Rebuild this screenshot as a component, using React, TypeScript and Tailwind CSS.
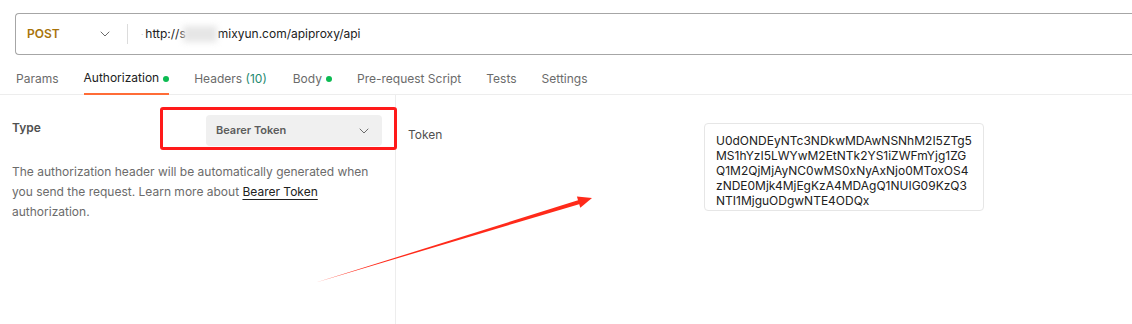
import React from "react";

const Chevron = ({ className = "" }: { className?: string }) => (
  <svg width="10" height="6" viewBox="0 0 10 6" className={className} fill="none">
    <path d="M1 1l4 4 4-4" stroke="#6b6b6b" strokeWidth="1" strokeLinecap="round" strokeLinejoin="round" />
  </svg>
);

const Dot = () => <span className="inline-block w-[6px] h-[6px] rounded-full bg-[#0cbb52] ml-[4px] mt-[1px]" />;

export default function App() {
  const tabs: { label: React.ReactNode; active?: boolean; dot?: boolean; extra?: string }[] = [
    { label: "Params" },
    { label: "Authorization", active: true, dot: true },
    {
      label: (
        <>
          Headers <span className="text-[#1f8a70]">(10)</span>
        </>
      ),
      extra: "mr-[1px]",
    },
    { label: "Body", dot: true },
    { label: "Pre-request Script" },
    { label: "Tests" },
    { label: "Settings" },
  ];

  return (
    <div
      className="relative w-[1132px] h-[324px] bg-white overflow-hidden text-[#212121]"
      style={{ fontFamily: "Inter, 'Noto Sans', 'Liberation Sans', sans-serif" }}
    >
      {/* URL bar */}
      <div className="pt-[13px] pl-[15px]">
        <div className="h-[42px] border border-r-0 border-[#a6a6a6] rounded-l-[4px] flex items-center">
          <div className="w-[111px] pl-[11px] pr-[17px] flex items-center justify-between">
            <span className="text-[12px] font-semibold text-[#a8740a]">POST</span>
            <Chevron />
          </div>
          <div className="w-px h-[20px] bg-[#dcdcdc]" />
          <div className="ml-[13px] flex items-center text-[12px] text-[#212121]">
            <span className="text-[#c0c0c0] mr-[2px] text-[8px]">·</span>
            <span>http://s</span>
            <span className="inline-block w-[34px] h-[16px] bg-[#e6e6e6] blur-[3px] -ml-[3px] mr-[1px]" />
            <span>mixyun.com/apiproxy/api</span>
          </div>
        </div>
      </div>

      {/* Tabs */}
      <div className="mt-[7px] h-[33px] border-b border-[#ededed] flex items-stretch pl-[16px] gap-[25px] text-[12px] text-[#6b6b6b]">
        {tabs.map((t, i) => (
          <div
            key={i}
            className={
              "flex items-center pt-[1px] " +
              (t.active ? "border-b-2 border-[#ff6c37] text-[#212121] -mb-px " : "") +
              (t.extra ?? "")
            }
          >
            <span>{t.label}</span>
            {t.dot && <Dot />}
          </div>
        ))}
      </div>

      {/* Body */}
      <div className="flex h-[229px]">
        <div className="w-[396px] border-r border-[#ededed] pl-[12px] pr-[13px]">
          <div className="flex items-start pt-[20px]">
            <span className="text-[12px] font-semibold text-[#505050] pt-[4px] w-[194px]">Type</span>
            <div className="w-[176px] h-[31px] bg-[#f0f0f0] rounded-[4px] flex items-center justify-between pl-[10px] pr-[13px]">
              <span className="text-[11px] font-semibold text-[#5c5c5c]">Bearer Token</span>
              <Chevron />
            </div>
          </div>
          <p className="mt-[16px] text-[12px] leading-[20px] text-[#6b6b6b]">
            The authorization header will be automatically generated when you send the request. Learn more about{" "}
            <span className="text-[#212121] underline underline-offset-[3px] decoration-[#212121]">Bearer Token</span>{" "}
            authorization.
          </p>
        </div>
        <div className="flex-1 flex items-start pl-[12px] pt-[29px]">
          <span className="text-[12px] text-[#505050] pt-[2px] w-[296px]">Token</span>
          <div className="-mt-[1px] w-[280px] h-[88px] border border-[#e6e6e6] rounded-[4px] pl-[11px] pr-[8px] pt-[9px] text-[12px] leading-[15px] text-[#212121] break-all">
            U0dONDEyNTc3NDkwMDAwNSNhM2I5ZTg5
            <br />
            MS1hYzI5LWYwM2EtNTk2YS1iZWFmYjg1ZG
            <br />
            Q1M2QjMjAyNC0wMS0xNyAxNjo0MToxOS4
            <br />
            zNDE0Mjk4MjEgKzA4MDAgQ1NUIG09KzQ3
            <br />
            NTI1MjguODgwNTE4ODQx
          </div>
        </div>
      </div>

      {/* Annotations */}
      <div className="absolute left-[160px] top-[107px] w-[237px] h-[43px] border-[3px] border-[#ff1a1a] rounded-[3px]" />
      <svg className="absolute left-0 top-0" width="1132" height="324" viewBox="0 0 1132 324">
        <polygon points="316,282.5 581.6,203.4 580.4,199.6" fill="#ff2a1a" />
        <polygon points="592,198 576.9,196.4 580.3,207.8" fill="#ff2a1a" />
      </svg>
    </div>
  );
}
